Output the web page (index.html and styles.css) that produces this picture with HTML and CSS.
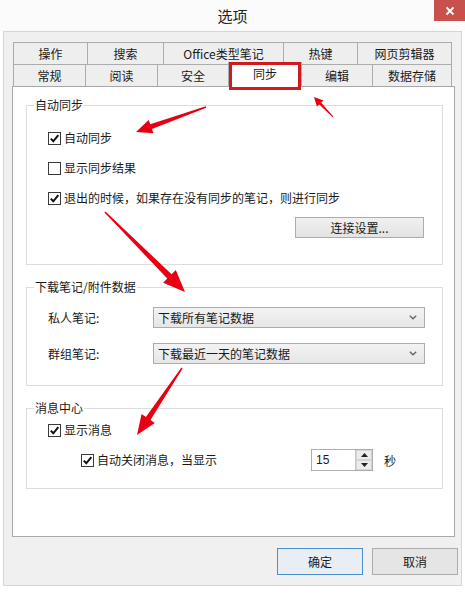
FILE: index.html
```html
<!DOCTYPE html>
<html lang="zh-CN">
<head>
<meta charset="utf-8">
<title>选项</title>
<link rel="stylesheet" href="styles.css">
</head>
<body>
<div class="titlebar">
  <div class="title">选项</div>
  <div class="close"><svg width="10" height="10" viewBox="0 0 10 10"><path d="M1.5 1.5 L8.5 8.5 M8.5 1.5 L1.5 8.5" stroke="#fff" stroke-width="1.8"/></svg></div>
</div>
<div class="frame">
  <div class="tabs">
    <div class="tabrow row1">
      <div class="tab">操作</div>
      <div class="tab">搜索</div>
      <div class="tab">Office类型笔记</div>
      <div class="tab">热键</div>
      <div class="tab last">网页剪辑器</div>
    </div>
    <div class="tabrow row2">
      <div class="tab">常规</div>
      <div class="tab">阅读</div>
      <div class="tab">安全</div>
      <div class="tab selected">同步<span class="mark"></span></div>
      <div class="tab">编辑</div>
      <div class="tab last">数据存储</div>
    </div>
  </div>
  <div class="panel">
    <fieldset class="group g1">
      <legend>自动同步</legend>
      <div class="body">
        <div class="check-row"><span class="cb checked"><svg width="11" height="11" viewBox="0 0 11 11"><path d="M1.8 5.6 L4.3 8.3 L9.3 2.2" fill="none" stroke="#111" stroke-width="2"/></svg></span><span>自动同步</span></div>
        <div class="check-row"><span class="cb"></span><span>显示同步结果</span></div>
        <div class="check-row"><span class="cb checked"><svg width="11" height="11" viewBox="0 0 11 11"><path d="M1.8 5.6 L4.3 8.3 L9.3 2.2" fill="none" stroke="#111" stroke-width="2"/></svg></span><span>退出的时候，如果存在没有同步的笔记，则进行同步</span></div>
        <div class="btn-row"><div class="btn conn">连接设置...</div></div>
      </div>
    </fieldset>
    <fieldset class="group g2">
      <legend>下载笔记/附件数据</legend>
      <div class="body">
        <div class="sel-row"><span class="sel-label">私人笔记:</span><div class="select"><span>下载所有笔记数据</span><svg width="8" height="5" viewBox="0 0 8 5"><path d="M0.8 0.8 L4 3.8 L7.2 0.8" fill="none" stroke="#666" stroke-width="1.4"/></svg></div></div>
        <div class="sel-row"><span class="sel-label">群组笔记:</span><div class="select"><span>下载最近一天的笔记数据</span><svg width="8" height="5" viewBox="0 0 8 5"><path d="M0.8 0.8 L4 3.8 L7.2 0.8" fill="none" stroke="#666" stroke-width="1.4"/></svg></div></div>
      </div>
    </fieldset>
    <fieldset class="group g3">
      <legend>消息中心</legend>
      <div class="body">
        <div class="check-row"><span class="cb checked"><svg width="11" height="11" viewBox="0 0 11 11"><path d="M1.8 5.6 L4.3 8.3 L9.3 2.2" fill="none" stroke="#111" stroke-width="2"/></svg></span><span>显示消息</span></div>
        <div class="msg-row">
          <div class="check-row sub"><span class="cb checked"><svg width="11" height="11" viewBox="0 0 11 11"><path d="M1.8 5.6 L4.3 8.3 L9.3 2.2" fill="none" stroke="#111" stroke-width="2"/></svg></span><span>自动关闭消息，当显示</span></div>
          <div class="spinner">
            <div class="spin-input">15</div>
            <div class="spin-btns">
              <div class="spin-btn"><svg width="7" height="4" viewBox="0 0 7 4"><path d="M0 4 L3.5 0 L7 4 Z" fill="#222"/></svg></div>
              <div class="spin-btn"><svg width="7" height="4" viewBox="0 0 7 4"><path d="M0 0 L3.5 4 L7 0 Z" fill="#222"/></svg></div>
            </div>
          </div>
          <span class="unit">秒</span>
        </div>
      </div>
    </fieldset>
  </div>
  <div class="buttons">
    <div class="btn dlg default">确定</div>
    <div class="btn dlg">取消</div>
  </div>
</div>
<svg class="arrows" width="465" height="593" viewBox="0 0 465 593">
  <polygon points="205.75,106.3 150.3,124.3 148.7,120.0 136,132 153.5,133.2 151.9,129.0 206.25,107.7" fill="#e60012"/>
  <polygon points="333.4,116.7 321.1,102.6 323.5,100.4 314,97 316.9,106.6 319.3,104.4 332.6,117.3" fill="#e60012"/>
  <polygon points="105.5,211.5 171.6,274.3 175.8,270.1 185,292 163.1,282.8 167.3,278.6 104.5,212.5" fill="#e60012"/>
  <polygon points="182.6,368.4 150.5,419.9 154.8,422.9 137,435 141.6,413.9 145.9,416.9 181.4,367.6" fill="#e60012"/>
</svg>
</body>
</html>
```

FILE: styles.css
```css
html, body {
  margin: 0;
  padding: 0;
}
body {
  width: 465px;
  height: 593px;
  background: #ffffff;
  font-family: "Noto Sans CJK SC", "Noto Sans", "Liberation Sans", sans-serif;
  font-size: 12px;
  color: #1a1a1a;
  position: relative;
  overflow: hidden;
}
.titlebar {
  height: 31px;
  display: flex;
  align-items: flex-start;
  background: #fbfbfb;
}
.title {
  flex: 1;
  padding-left: 31px;
  text-align: center;
  font-size: 15px;
  line-height: 31px;
  color: #222;
}
.close {
  width: 31px;
  height: 21px;
  background: #c9514c;
  display: flex;
  align-items: center;
  justify-content: center;
}
.frame {
  margin-left: 3px;
  width: 459px;
  height: 555px;
  box-sizing: border-box;
  border: 1px solid #d6d6d6;
  background: #f0f0f0;
  padding-top: 10px;
}
.tabs {
  margin-left: 9px;
  width: 439px;
}
.tabrow {
  display: grid;
  height: 22px;
}
.row1 { grid-template-columns: 74px 76px 120px 74px 95px; }
.row2 { grid-template-columns: 72px 72px 71px 73px 71px 80px; align-items: start; }
.tab {
  box-sizing: border-box;
  height: 22px;
  border-top: 1px solid #acacac;
  border-left: 1px solid #acacac;
  background: #eeeeee;
  text-align: center;
  line-height: 21px;
  font-size: 12px;
  color: #1a1a1a;
}
.tab.last { border-right: 1px solid #acacac; }
.tab.selected {
  position: relative;
  z-index: 2;
  height: 25px;
  margin-top: -2px;
  background: #ffffff;
  border-right: 1px solid #acacac;
  margin-right: -1px;
  line-height: 22px;
}
.mark {
  position: absolute;
  left: 0;
  right: 0;
  top: -1px;
  bottom: -3px;
  border: 3px solid #cf1a20;
}
.panel {
  margin-left: 8px;
  width: 443px;
  height: 451px;
  box-sizing: border-box;
  border: 1px solid #a9a9a9;
  background: #ffffff;
  padding-top: 10px;
}
.group {
  margin: 0 11px 0 13px;
  padding: 0;
  border: 1px solid #dcdcdc;
  min-width: 0;
}
.group legend {
  margin-left: 7px;
  padding: 0 1px;
  font-size: 12px;
  line-height: 16px;
}
.g2, .g3 { margin-top: 14px; }
.g1 .body { padding: 15px 18px 26px 21px; }
.g2 .body { padding: 12px 17px 22px 21px; }
.g3 .body { padding: 4px 17px 17px 21px; }
.check-row {
  display: flex;
  align-items: center;
  height: 20px;
  line-height: 20px;
  white-space: nowrap;
}
.g1 .check-row + .check-row { margin-top: 10px; }
.cb {
  width: 13px;
  height: 13px;
  box-sizing: border-box;
  border: 1px solid #3a3a3a;
  background: #fff;
  margin-right: 3px;
  display: flex;
  align-items: center;
  justify-content: center;
  flex: none;
}
.btn-row {
  display: flex;
  justify-content: flex-end;
  margin-top: 9px;
}
.btn {
  box-sizing: border-box;
  border: 1px solid #acacac;
  background: #e1e1e1;
  text-align: center;
  color: #1a1a1a;
}
.conn {
  width: 129px;
  height: 21px;
  line-height: 19px;
  background: linear-gradient(#f0f0f0, #e3e3e3);
}
.sel-row {
  display: flex;
  align-items: center;
  height: 20px;
}
.sel-row + .sel-row { margin-top: 16px; }
.sel-label {
  width: 105px;
  flex: none;
}
.select {
  flex: 1;
  height: 21px;
  box-sizing: border-box;
  border: 1px solid #acacac;
  background: linear-gradient(#f3f3f3, #e6e6e6);
  display: flex;
  align-items: center;
  justify-content: space-between;
  padding: 0 7px 0 4px;
  line-height: 19px;
}
.msg-row {
  display: flex;
  align-items: center;
  height: 22px;
  margin-top: 9px;
  padding-left: 33px;
}
.check-row.sub {
  width: 230px;
  flex: none;
}
.spinner {
  display: flex;
  width: 62px;
  height: 22px;
  box-sizing: border-box;
  border: 1px solid #abadb3;
  background: #fff;
}
.spin-input {
  flex: 1;
  padding-left: 4px;
  line-height: 20px;
  font-family: "Liberation Sans", sans-serif;
  font-size: 12px;
}
.spin-btns {
  width: 16px;
  display: flex;
  flex-direction: column;
  border-left: 1px solid #c8c8c8;
}
.spin-btn {
  flex: 1;
  display: flex;
  align-items: center;
  justify-content: center;
  background: #ececec;
  border: 1px solid #d4d4d4;
  box-sizing: border-box;
}
.unit {
  margin-left: 11px;
}
.buttons {
  display: flex;
  justify-content: flex-end;
  gap: 9px;
  margin-top: 11px;
  padding-right: 3px;
}
.dlg {
  width: 86px;
  height: 27px;
  line-height: 25px;
  background: #e5e5e5;
}
.dlg.default {
  border-color: #4a90cf;
  background: #e8eef3;
}
.arrows {
  position: absolute;
  left: 0;
  top: 0;
  pointer-events: none;
}
```
